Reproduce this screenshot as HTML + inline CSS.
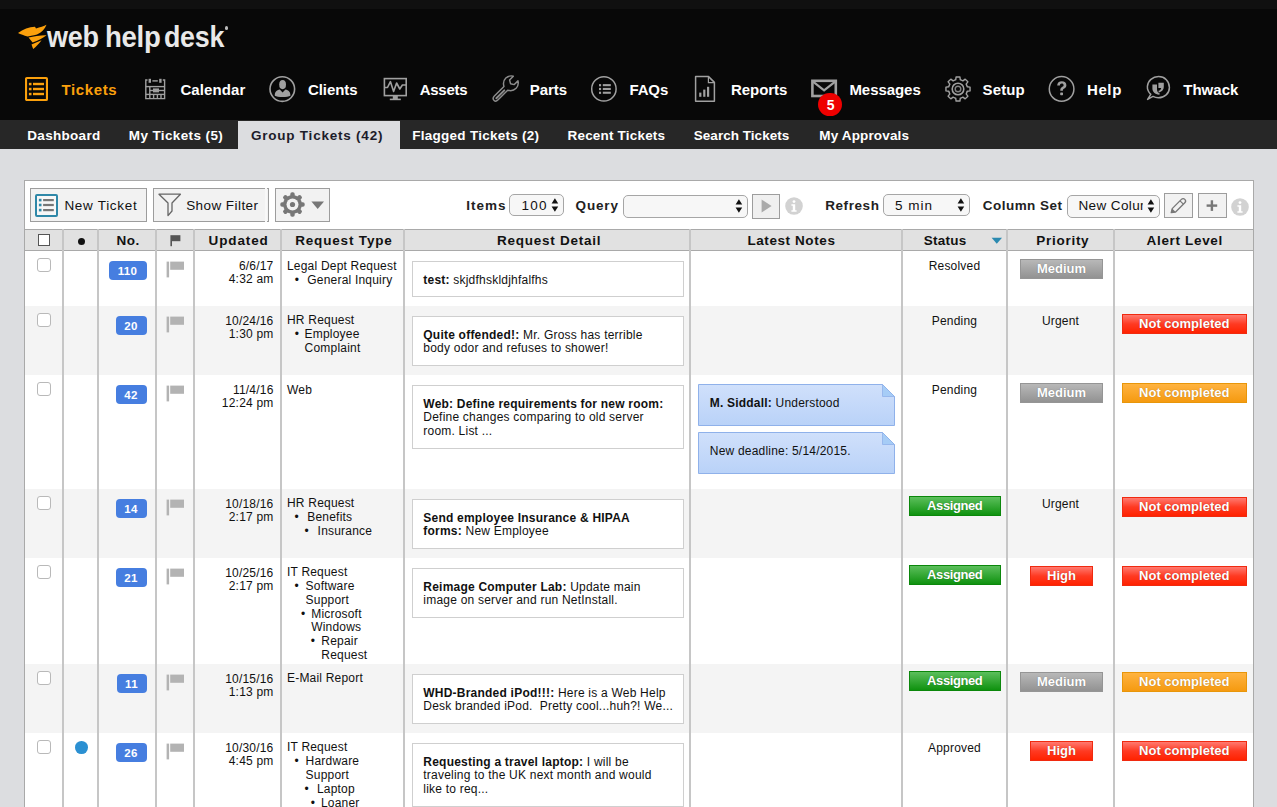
<!DOCTYPE html><html><head><meta charset="utf-8"><title>Web Help Desk</title><style>
html,body{margin:0;padding:0} body{width:1277px;height:807px;overflow:hidden;position:relative;background:#dcdde0;font-family:"Liberation Sans", sans-serif}
.t{position:absolute;white-space:nowrap}
</style></head><body>
<div style="position:absolute;left:0px;top:0px;width:1277px;height:9px;background:#101010"></div>
<div style="position:absolute;left:0px;top:9px;width:1277px;height:111px;background:#080808"></div>
<svg style="position:absolute;left:15px;top:22px" width="36" height="30" viewBox="0 0 36 30"><g fill="#fba00c"><path d="M3,11 C8,7.5 14,5 20,4.8 L21,6.5 C25,5.5 29,4 31.5,2.8 C30,7 26.5,10.5 22,12.6 C18,13.8 14,14.3 12.5,14.4 C9,13.6 5.5,12.2 3,11 Z"/><path d="M13.5,15.6 C19,14 26,13 31.6,13.2 C28,16 23,18.6 17.6,20.6 Z"/><path d="M16.5,22.4 C20,21 23.5,19.6 26.6,18.2 C24,21.6 21,24.6 18.2,27 C17.6,25.5 17,24 16.5,22.4 Z"/></g></svg>
<div class="t" style="left:46.50px;top:23.25px;font-size:29px;line-height:29px;font-weight:700;color:#e9e9e9;letter-spacing:-0.3px;transform:scaleX(0.93);transform-origin:0 0">web</div>
<div class="t" style="left:104.60px;top:23.25px;font-size:29px;line-height:29px;font-weight:700;color:#e9e9e9;letter-spacing:-0.3px;transform:scaleX(0.95);transform-origin:0 0">help</div>
<div class="t" style="left:163.60px;top:23.25px;font-size:29px;line-height:29px;font-weight:700;color:#e9e9e9;letter-spacing:-0.3px;transform:scaleX(0.925);transform-origin:0 0">desk</div>
<div style="position:absolute;left:224.6px;top:26.4px;width:3.2px;height:3.2px;border-radius:50%;background:#bbb"></div>
<svg style="position:absolute;left:25px;top:77px" width="23" height="24" viewBox="0 0 23 24"><rect x="1.05" y="1.05" width="20.9" height="21.9" fill="none" stroke="#fba00c" stroke-width="2.1" rx="0.8"/><g fill="#fba00c"><rect x="3.9" y="5.8" width="2.6" height="2.5"/><rect x="3.9" y="10.8" width="2.6" height="2.5"/><rect x="3.9" y="15.8" width="2.6" height="2.5"/><rect x="8" y="5.8" width="11" height="2.4"/><rect x="8" y="10.8" width="11" height="2.4"/><rect x="8" y="15.8" width="11" height="2.4"/></g></svg>
<div class="t" style="left:61.60px;top:82.20px;font-size:15px;line-height:15px;font-weight:700;color:#fba00c;letter-spacing:0.6px;">Tickets</div>
<svg style="position:absolute;left:144px;top:78px" width="22" height="22" viewBox="0 0 22 22"><g fill="none" stroke="#a0a0a0" stroke-width="1.4"><path d="M3.5,2 L1.8,2 L1.8,20.6 L20.6,20.6 L20.6,2 L18.8,2"/><line x1="1.8" y1="8.6" x2="20.6" y2="8.6"/><line x1="1.8" y1="16.4" x2="20.6" y2="16.4"/><line x1="5.8" y1="8.6" x2="5.8" y2="20.6"/><line x1="9.6" y1="16.4" x2="9.6" y2="20.6"/><line x1="13.4" y1="16.4" x2="13.4" y2="20.6"/><line x1="17" y1="16.4" x2="17" y2="20.6"/><line x1="5.8" y1="12.5" x2="20.6" y2="12.5"/></g><g fill="#a0a0a0"><rect x="4.6" y="0.8" width="2.4" height="4"/><rect x="15.2" y="0.8" width="2.4" height="4"/><rect x="8.4" y="2.2" width="5.4" height="1.4"/><rect x="9" y="10.4" width="6" height="4"/></g></svg>
<div class="t" style="left:180.40px;top:82.20px;font-size:15px;line-height:15px;font-weight:700;color:#ffffff;letter-spacing:0.1px;">Calendar</div>
<svg style="position:absolute;left:268px;top:75px" width="29" height="29" viewBox="0 0 29 29"><circle cx="14.3" cy="14.1" r="12.3" fill="none" stroke="#a0a0a0" stroke-width="1.6"/><g fill="#a0a0a0"><ellipse cx="14.6" cy="9.6" rx="3.4" ry="4.6"/><path d="M6.8,20.8 C6.6,17 8.6,15.3 11.8,14.6 L14.6,17.4 L17.4,14.6 C20.6,15.3 22.6,17 22.4,20.8 C19.8,22.4 9.4,22.4 6.8,20.8 Z"/></g></svg>
<div class="t" style="left:307.90px;top:82.20px;font-size:15px;line-height:15px;font-weight:700;color:#ffffff;letter-spacing:-0.05px;">Clients</div>
<svg style="position:absolute;left:383px;top:77px" width="25" height="25" viewBox="0 0 25 25"><rect x="1.4" y="1.6" width="21.8" height="17" fill="none" stroke="#a0a0a0" stroke-width="1.6"/><polyline points="1.6,10.5 4.5,10.5 7.4,4.6 10.6,14.4 13.6,6 16.8,12 19.4,8 23,8" fill="none" stroke="#a0a0a0" stroke-width="1.6" stroke-linejoin="round"/><g fill="#a0a0a0"><rect x="9.8" y="19" width="5" height="3"/><rect x="6.8" y="21.6" width="11" height="1.6"/></g></svg>
<div class="t" style="left:419.80px;top:82.20px;font-size:15px;line-height:15px;font-weight:700;color:#ffffff;letter-spacing:-0.3px;">Assets</div>
<svg style="position:absolute;left:490px;top:74px" width="32" height="30" viewBox="0 0 32 30"><g transform="translate(15,14) scale(1.17) translate(-15,-14)"><path d="M5.2,24.2 C4,23 4.2,21.6 5.4,20.4 L13.6,12.2 C12.8,9.6 13.2,7 15.2,5 C17,3.4 19.4,2.8 21.6,3.4 L18.4,6.6 L19.2,9.8 L22.4,10.6 L25.6,7.4 C26.2,9.6 25.6,12 24,13.8 C22,15.8 19.4,16.2 16.8,15.4 L8.6,23.6 C7.4,24.8 6.2,25.2 5.2,24.2 Z" fill="none" stroke="#8c8c8c" stroke-width="1.25" stroke-linejoin="round" transform="translate(0.5,0.5)"/><line x1="7.6" y1="22.8" x2="14.4" y2="16" stroke="#8c8c8c" stroke-width="1.7" stroke-linecap="round"/></g></svg>
<div class="t" style="left:529.80px;top:82.20px;font-size:15px;line-height:15px;font-weight:700;color:#ffffff;letter-spacing:-0.05px;">Parts</div>
<svg style="position:absolute;left:589px;top:75px" width="29" height="28" viewBox="0 0 29 28"><circle cx="14.9" cy="13.9" r="12.2" fill="none" stroke="#a0a0a0" stroke-width="1.5"/><g fill="#a0a0a0"><rect x="10" y="9.1" width="2.1" height="2.2"/><rect x="10" y="12.9" width="2.1" height="2.2"/><rect x="10" y="16.7" width="2.1" height="2.2"/><rect x="13.8" y="9.1" width="8" height="2.1"/><rect x="13.8" y="12.9" width="8" height="2.1"/><rect x="13.8" y="16.7" width="8" height="2.1"/></g></svg>
<div class="t" style="left:629.40px;top:82.20px;font-size:15px;line-height:15px;font-weight:700;color:#ffffff;letter-spacing:-0.1px;">FAQs</div>
<svg style="position:absolute;left:694px;top:75px" width="23" height="28" viewBox="0 0 23 28"><path d="M1.6,1.6 L14.6,1.6 L20.4,7.4 L20.4,26.2 L1.6,26.2 Z" fill="none" stroke="#a0a0a0" stroke-width="1.5" stroke-linejoin="round"/><path d="M14.4,2 L14.4,7.6 L20,7.6" fill="none" stroke="#a0a0a0" stroke-width="1.2"/><g fill="#a0a0a0"><rect x="5.2" y="17.6" width="2.2" height="4.2"/><rect x="9.2" y="14.6" width="2.2" height="7.2"/><rect x="13" y="11.8" width="2.2" height="10"/></g></svg>
<div class="t" style="left:731.00px;top:82.20px;font-size:15px;line-height:15px;font-weight:700;color:#ffffff;letter-spacing:-0.05px;">Reports</div>
<svg style="position:absolute;left:810px;top:79px" width="28" height="20" viewBox="0 0 28 20"><rect x="2.4" y="1.8" width="23.4" height="15.2" fill="none" stroke="#a0a0a0" stroke-width="2.6"/><polyline points="3,2.6 14.1,11.4 25.2,2.6" fill="none" stroke="#a0a0a0" stroke-width="2.2"/></svg>
<div style="position:absolute;left:818.3px;top:92.9px;width:23.6px;height:23.6px;border-radius:50%;background:#ee0000"></div>
<div class="t" style="left:630.60px;width:400px;text-align:center;top:97.55px;font-size:14px;line-height:14px;font-weight:700;color:#fff;letter-spacing:0px;">5</div>
<div class="t" style="left:849.40px;top:82.20px;font-size:15px;line-height:15px;font-weight:700;color:#ffffff;letter-spacing:-0.05px;">Messages</div>
<svg style="position:absolute;left:945px;top:75.8px" width="26" height="26" viewBox="0 0 26 26"><path d="M10.14,3.94 L10.70,3.78 L11.09,0.95 L14.91,0.95 L15.30,3.78 L15.86,3.94 L17.39,4.57 L17.89,4.86 L20.17,3.13 L22.87,5.83 L21.14,8.11 L21.43,8.61 L22.06,10.14 L22.22,10.70 L25.05,11.09 L25.05,14.91 L22.22,15.30 L22.06,15.86 L21.43,17.39 L21.14,17.89 L22.87,20.17 L20.17,22.87 L17.89,21.14 L17.39,21.43 L15.86,22.06 L15.30,22.22 L14.91,25.05 L11.09,25.05 L10.70,22.22 L10.14,22.06 L8.61,21.43 L8.11,21.14 L5.83,22.87 L3.13,20.17 L4.86,17.89 L4.57,17.39 L3.94,15.86 L3.78,15.30 L0.95,14.91 L0.95,11.09 L3.78,10.70 L3.94,10.14 L4.57,8.61 L4.86,8.11 L3.13,5.83 L5.83,3.13 L8.11,4.86 L8.61,4.57 Z" fill="none" stroke="#a0a0a0" stroke-width="1.4" stroke-linejoin="round"/><circle cx="13" cy="13" r="5.8" fill="none" stroke="#a0a0a0" stroke-width="1.6"/><circle cx="13" cy="13" r="2.8" fill="none" stroke="#a0a0a0" stroke-width="1.4" opacity="0.8"/></svg>
<div class="t" style="left:982.60px;top:82.20px;font-size:15px;line-height:15px;font-weight:700;color:#ffffff;letter-spacing:0.1px;">Setup</div>
<svg style="position:absolute;left:1047px;top:75px" width="29" height="28" viewBox="0 0 29 28"><circle cx="14.6" cy="13.9" r="12.3" fill="none" stroke="#a0a0a0" stroke-width="1.5"/><path d="M10.2,10.6 C10.2,7.6 12.2,6.2 14.8,6.2 C17.6,6.2 19.4,7.8 19.4,10.2 C19.4,12.2 18.2,13 16.8,13.8 C16,14.3 15.9,14.8 15.9,15.8 L13.3,15.8 C13.2,14 13.6,13 15,12.1 C16.2,11.3 16.6,10.9 16.6,10.2 C16.6,9.2 15.9,8.6 14.8,8.6 C13.6,8.6 12.9,9.4 12.9,10.6 Z" fill="#a0a0a0"/><rect x="13.2" y="17.4" width="2.8" height="2.8" rx="0.6" fill="#a0a0a0"/></svg>
<div class="t" style="left:1087.00px;top:82.20px;font-size:15px;line-height:15px;font-weight:700;color:#ffffff;letter-spacing:0.6px;">Help</div>
<svg style="position:absolute;left:1144px;top:75px" width="28" height="29" viewBox="0 0 28 29"><path d="M3.6,24.4 L6.8,19.4 C4.4,17 3.2,14.2 3.4,11.4 C3.8,5.6 8.6,1.6 14.6,1.6 C20.8,1.6 25.4,6.2 25.4,12.4 C25.4,18.6 20.4,22.8 14.4,22.8 C12.2,22.8 10.4,22.2 9,21.4 Z" fill="none" stroke="#a0a0a0" stroke-width="1.5" stroke-linejoin="round"/><g fill="#a0a0a0"><path d="M8.4,9.4 L13,9.4 L13,14 C13,16.4 14,18 16,18.8 L15.2,19.8 C11,19.4 8.4,17 8.4,13.6 Z"/><path d="M14.4,7.8 L19.8,7.8 L19.8,11.6 C19.8,15.2 17.4,17.2 14.6,17.4 L14.6,15.8 C16,15.6 17,14.4 17.2,13 L14.4,13 Z"/></g></svg>
<div class="t" style="left:1183.20px;top:82.20px;font-size:15px;line-height:15px;font-weight:700;color:#ffffff;letter-spacing:0.05px;">Thwack</div>
<div style="position:absolute;left:0px;top:120px;width:1277px;height:28.6px;background:#272727"></div>
<div style="position:absolute;left:238px;top:121.4px;width:162px;height:28px;background:#dcdde0"></div>
<div class="t" style="left:27.30px;top:129.47px;font-size:13.5px;line-height:13.5px;font-weight:700;color:#fff;letter-spacing:0.3px;">Dashboard</div>
<div class="t" style="left:128.80px;top:129.47px;font-size:13.5px;line-height:13.5px;font-weight:700;color:#fff;letter-spacing:0.38px;">My Tickets (5)</div>
<div class="t" style="left:250.90px;top:129.47px;font-size:13.5px;line-height:13.5px;font-weight:700;color:#1c1c2a;letter-spacing:0.78px;">Group Tickets (42)</div>
<div class="t" style="left:412.30px;top:129.47px;font-size:13.5px;line-height:13.5px;font-weight:700;color:#fff;letter-spacing:0.26px;">Flagged Tickets (2)</div>
<div class="t" style="left:567.50px;top:129.47px;font-size:13.5px;line-height:13.5px;font-weight:700;color:#fff;letter-spacing:0.19px;">Recent Tickets</div>
<div class="t" style="left:693.80px;top:129.47px;font-size:13.5px;line-height:13.5px;font-weight:700;color:#fff;letter-spacing:0.03px;">Search Tickets</div>
<div class="t" style="left:819.30px;top:129.47px;font-size:13.5px;line-height:13.5px;font-weight:700;color:#fff;letter-spacing:0.15px;">My Approvals</div>
<div style="position:absolute;left:24px;top:180px;width:1230px;height:700px;background:#fff;border:1px solid #a9a9a9;box-sizing:border-box"></div>
<div style="position:absolute;left:30px;top:188px;width:117px;height:34px;background:#f2f2f2;border:1px solid #9d9d9d;box-sizing:border-box"></div>
<svg style="position:absolute;left:35px;top:194px" width="23" height="23" viewBox="0 0 23 23"><rect x="1" y="1" width="21" height="21" fill="#f7f7f7" stroke="#2f88a8" stroke-width="2" rx="1"/><g fill="#2f88a8"><rect x="3.9" y="4.8" width="2.6" height="2.6"/><rect x="3.9" y="9.7" width="2.6" height="2.6"/><rect x="3.9" y="14.8" width="2.6" height="2.6"/></g><g fill="#777"><rect x="8.1" y="5" width="10.7" height="2.2"/><rect x="8.1" y="9.9" width="10.7" height="2.2"/><rect x="8.1" y="15" width="10.7" height="2.2"/></g></svg>
<div class="t" style="left:64.40px;top:198.57px;font-size:13.5px;line-height:13.5px;font-weight:400;color:#111;letter-spacing:0.7px;">New Ticket</div>
<div style="position:absolute;left:153px;top:188px;width:116px;height:34px;background:#f2f2f2;border:1px solid #9d9d9d;box-sizing:border-box"></div>
<svg style="position:absolute;left:157px;top:192px" width="26" height="26" viewBox="0 0 26 26"><path d="M2,2.2 L23.4,2.2 L15,11 L15,19 L11,23.6 L11,11 Z" fill="none" stroke="#666" stroke-width="1.3" stroke-linejoin="round"/></svg>
<div style="position:absolute;left:265px;top:188px;width:2px;height:34px;background:#f8f8f8"></div>
<div class="t" style="left:186.20px;top:198.57px;font-size:13.5px;line-height:13.5px;font-weight:400;color:#111;letter-spacing:0.43px;">Show Filter</div>
<div style="position:absolute;left:275px;top:188px;width:55px;height:34px;background:#f2f2f2;border:1px solid #9d9d9d;box-sizing:border-box"></div>
<svg style="position:absolute;left:280px;top:191.5px" width="25" height="25" viewBox="0 0 25 25"><circle cx="12.5" cy="12.5" r="9.4" fill="#777"/><rect x="10.3" y="0.3" width="4.4" height="6" rx="1.8" fill="#777" transform="rotate(0 12.5 12.5)"/><rect x="10.3" y="0.3" width="4.4" height="6" rx="1.8" fill="#777" transform="rotate(45 12.5 12.5)"/><rect x="10.3" y="0.3" width="4.4" height="6" rx="1.8" fill="#777" transform="rotate(90 12.5 12.5)"/><rect x="10.3" y="0.3" width="4.4" height="6" rx="1.8" fill="#777" transform="rotate(135 12.5 12.5)"/><rect x="10.3" y="0.3" width="4.4" height="6" rx="1.8" fill="#777" transform="rotate(180 12.5 12.5)"/><rect x="10.3" y="0.3" width="4.4" height="6" rx="1.8" fill="#777" transform="rotate(225 12.5 12.5)"/><rect x="10.3" y="0.3" width="4.4" height="6" rx="1.8" fill="#777" transform="rotate(270 12.5 12.5)"/><rect x="10.3" y="0.3" width="4.4" height="6" rx="1.8" fill="#777" transform="rotate(315 12.5 12.5)"/><circle cx="12.5" cy="12.5" r="6" fill="#f2f2f2"/><circle cx="12.5" cy="12.5" r="2.6" fill="#777"/></svg>
<svg style="position:absolute;left:311px;top:201px" width="14" height="9" viewBox="0 0 14 9"><path d="M0.4,0.4 L13,0.4 L6.7,8 Z" fill="#777"/></svg>
<div class="t" style="left:466.30px;top:198.57px;font-size:13.5px;line-height:13.5px;font-weight:700;color:#222;letter-spacing:1.0px;">Items</div>
<div style="position:absolute;left:509px;top:194px;width:55px;height:22px;background:#f7f7f7;border:1px solid #a6a6a6;border-radius:5px;box-sizing:border-box"></div>
<div class="t" style="left:521.60px;top:198.57px;font-size:13.5px;line-height:13.5px;font-weight:400;color:#111;letter-spacing:1.2px;">100</div>
<svg style="position:absolute;left:550.8px;top:197px" width="8" height="16" viewBox="0 0 8 16"><path d="M0.6,6.6 L7.2,6.6 L3.9,1.2 Z M0.6,9.4 L7.2,9.4 L3.9,14.8 Z" fill="#111"/></svg>
<div class="t" style="left:575.60px;top:198.57px;font-size:13.5px;line-height:13.5px;font-weight:700;color:#222;letter-spacing:0.82px;">Query</div>
<div style="position:absolute;left:623px;top:195px;width:125px;height:23px;background:#f7f7f7;border:1px solid #a6a6a6;border-radius:5px;box-sizing:border-box"></div>
<svg style="position:absolute;left:734.8px;top:198.4px" width="8" height="16" viewBox="0 0 8 16"><path d="M0.6,6.6 L7.2,6.6 L3.9,1.2 Z M0.6,9.4 L7.2,9.4 L3.9,14.8 Z" fill="#111"/></svg>
<div style="position:absolute;left:752px;top:194px;width:28px;height:25px;background:#f0f0f0;border:1px solid #9d9d9d;box-sizing:border-box"></div>
<svg style="position:absolute;left:761px;top:199px" width="12" height="15" viewBox="0 0 12 15"><path d="M0.6,0.6 L10.6,7 L0.6,13.6 Z" fill="#aaa"/></svg>
<svg style="position:absolute;left:785.2px;top:197.4px" width="18" height="18" viewBox="0 0 18 18"><circle cx="9" cy="9" r="8.8" fill="#d2d2d2"/><circle cx="9" cy="4.6" r="1.4" fill="#fff"/><path d="M6.4,7.2 L10.2,7.2 L10.2,13.2 L11.6,13.2 L11.6,14.8 L6.4,14.8 L6.4,13.2 L7.8,13.2 L7.8,8.8 L6.4,8.8 Z" fill="#fff"/></svg>
<div class="t" style="left:825.20px;top:198.57px;font-size:13.5px;line-height:13.5px;font-weight:700;color:#222;letter-spacing:0.57px;">Refresh</div>
<div style="position:absolute;left:883px;top:194px;width:87px;height:22px;background:#f7f7f7;border:1px solid #a6a6a6;border-radius:5px;box-sizing:border-box"></div>
<div class="t" style="left:894.90px;top:198.57px;font-size:13.5px;line-height:13.5px;font-weight:400;color:#111;letter-spacing:1.0px;">5 min</div>
<svg style="position:absolute;left:957px;top:197px" width="8" height="16" viewBox="0 0 8 16"><path d="M0.6,6.6 L7.2,6.6 L3.9,1.2 Z M0.6,9.4 L7.2,9.4 L3.9,14.8 Z" fill="#111"/></svg>
<div class="t" style="left:982.80px;top:198.57px;font-size:13.5px;line-height:13.5px;font-weight:700;color:#222;letter-spacing:0.46px;">Column Set</div>
<div style="position:absolute;left:1067px;top:195px;width:93px;height:23px;background:#f7f7f7;border:1px solid #a6a6a6;border-radius:5px;box-sizing:border-box"></div>
<div class="t" style="left:1078.4px;top:198.6px;width:65px;overflow:hidden;font-size:13.5px;line-height:13.5px;color:#111;letter-spacing:0.4px">New Column Set</div>
<svg style="position:absolute;left:1147px;top:198.4px" width="8" height="16" viewBox="0 0 8 16"><path d="M0.6,6.6 L7.2,6.6 L3.9,1.2 Z M0.6,9.4 L7.2,9.4 L3.9,14.8 Z" fill="#111"/></svg>
<div style="position:absolute;left:1164px;top:193px;width:29px;height:25px;background:#f2f2f2;border:1px solid #9d9d9d;box-sizing:border-box"></div>
<svg style="position:absolute;left:1169px;top:197px" width="19" height="18" viewBox="0 0 19 18"><path d="M2.2,15.6 L3.2,11.6 L12.4,2.4 C13.4,1.4 14.8,1.4 15.8,2.4 C16.8,3.4 16.8,4.8 15.8,5.8 L6.6,15 Z" fill="none" stroke="#777" stroke-width="1.3" stroke-linejoin="round"/><path d="M2.2,15.6 L3.2,11.6 L6.6,15 Z" fill="#777"/><line x1="11" y1="3.8" x2="14.4" y2="7.2" stroke="#777" stroke-width="1.2"/></svg>
<div style="position:absolute;left:1198px;top:193px;width:29px;height:25px;background:#f2f2f2;border:1px solid #9d9d9d;box-sizing:border-box"></div>
<svg style="position:absolute;left:1206px;top:200px" width="13" height="11" viewBox="0 0 13 11"><rect x="0.6" y="4.4" width="10.6" height="2.4" fill="#777"/><rect x="4.7" y="0.3" width="2.4" height="10.6" fill="#777"/></svg>
<svg style="position:absolute;left:1231.2px;top:197.5px" width="18" height="18" viewBox="0 0 18 18"><circle cx="9" cy="9" r="8.8" fill="#d2d2d2"/><circle cx="9" cy="4.6" r="1.4" fill="#fff"/><path d="M6.4,7.2 L10.2,7.2 L10.2,13.2 L11.6,13.2 L11.6,14.8 L6.4,14.8 L6.4,13.2 L7.8,13.2 L7.8,8.8 L6.4,8.8 Z" fill="#fff"/></svg>
<div style="position:absolute;left:24px;top:229px;width:1230px;height:22px;background:#e1e1e1;border-top:1px solid #a9a9a9;border-bottom:1px solid #a9a9a9;box-sizing:border-box"></div>
<div style="position:absolute;left:25px;top:251px;width:1228px;height:55px;background:#ffffff"></div>
<div style="position:absolute;left:25px;top:306px;width:1228px;height:69px;background:#f4f4f4"></div>
<div style="position:absolute;left:25px;top:375px;width:1228px;height:114px;background:#ffffff"></div>
<div style="position:absolute;left:25px;top:489px;width:1228px;height:69px;background:#f4f4f4"></div>
<div style="position:absolute;left:25px;top:558px;width:1228px;height:106px;background:#ffffff"></div>
<div style="position:absolute;left:25px;top:664px;width:1228px;height:69px;background:#f4f4f4"></div>
<div style="position:absolute;left:25px;top:733px;width:1228px;height:74px;background:#ffffff"></div>
<div style="position:absolute;left:62px;top:229px;width:2px;height:600px;background:#c6c6c6"></div>
<div style="position:absolute;left:97px;top:229px;width:2px;height:600px;background:#c6c6c6"></div>
<div style="position:absolute;left:155px;top:229px;width:2px;height:600px;background:#c6c6c6"></div>
<div style="position:absolute;left:193px;top:229px;width:2px;height:600px;background:#c6c6c6"></div>
<div style="position:absolute;left:280px;top:229px;width:2px;height:600px;background:#c6c6c6"></div>
<div style="position:absolute;left:403px;top:229px;width:2px;height:600px;background:#c6c6c6"></div>
<div style="position:absolute;left:689px;top:229px;width:2px;height:600px;background:#c6c6c6"></div>
<div style="position:absolute;left:901px;top:229px;width:2px;height:600px;background:#c6c6c6"></div>
<div style="position:absolute;left:1006px;top:229px;width:2px;height:600px;background:#c6c6c6"></div>
<div style="position:absolute;left:1113px;top:229px;width:2px;height:600px;background:#c6c6c6"></div>
<div style="position:absolute;left:24px;top:229px;width:1px;height:600px;background:#a9a9a9"></div>
<div style="position:absolute;left:1253px;top:180px;width:1px;height:650px;background:#a9a9a9"></div>
<div style="position:absolute;left:38px;top:234px;width:12px;height:12px;background:#fff;border:1px solid #555;box-sizing:border-box"></div>
<div style="position:absolute;left:77.5px;top:237.5px;width:7px;height:7px;border-radius:50%;background:#111"></div>
<div class="t" style="left:116.40px;top:233.57px;font-size:13.5px;line-height:13.5px;font-weight:700;color:#111;letter-spacing:0.5px;">No.</div>
<svg style="position:absolute;left:170px;top:235px" width="11" height="12" viewBox="0 0 11 12"><rect x="0.4" y="0.2" width="1.6" height="11" fill="#555"/><rect x="2" y="0.2" width="8.4" height="6" fill="#555"/></svg>
<div class="t" style="left:208.50px;top:233.57px;font-size:13.5px;line-height:13.5px;font-weight:700;color:#111;letter-spacing:0.88px;">Updated</div>
<div class="t" style="left:295.20px;top:233.57px;font-size:13.5px;line-height:13.5px;font-weight:700;color:#111;letter-spacing:0.83px;">Request Type</div>
<div class="t" style="left:497.00px;top:233.57px;font-size:13.5px;line-height:13.5px;font-weight:700;color:#111;letter-spacing:0.74px;">Request Detail</div>
<div class="t" style="left:747.40px;top:233.57px;font-size:13.5px;line-height:13.5px;font-weight:700;color:#111;letter-spacing:0.59px;">Latest Notes</div>
<div class="t" style="left:923.80px;top:233.57px;font-size:13.5px;line-height:13.5px;font-weight:700;color:#111;letter-spacing:0.26px;">Status</div>
<svg style="position:absolute;left:991px;top:237px" width="12" height="8" viewBox="0 0 12 8"><path d="M0.6,0.8 L11,0.8 L5.8,6.8 Z" fill="#2b8ab0"/></svg>
<div class="t" style="left:1036.20px;top:233.57px;font-size:13.5px;line-height:13.5px;font-weight:700;color:#111;letter-spacing:0.74px;">Priority</div>
<div class="t" style="left:1146.60px;top:233.57px;font-size:13.5px;line-height:13.5px;font-weight:700;color:#111;letter-spacing:0.66px;">Alert Level</div>
<div style="position:absolute;left:37px;top:258px;width:14px;height:14px;background:#fff;border:1px solid #b9b9b9;border-radius:3px;box-sizing:border-box"></div>
<div style="position:absolute;left:108.5px;top:261px;width:38px;height:19px;border-radius:4px;background:#467ee0;color:#fff;font-weight:700;font-size:11.5px;line-height:21.4px;text-align:center;letter-spacing:0.3px">110</div>
<svg style="position:absolute;left:166px;top:261px" width="19" height="17" viewBox="0 0 19 17"><rect x="0.6" y="0.6" width="2.5" height="15.8" fill="#b3b3b3"/><rect x="4.2" y="0.6" width="13.8" height="8.2" fill="#b3b3b3"/></svg>
<div class="t" style="right:1003.50px;top:259.64px;font-size:12px;line-height:12px;font-weight:400;color:#111;letter-spacing:0.2px;text-align:right;">6/6/17</div>
<div class="t" style="right:1003.50px;top:273.44px;font-size:12px;line-height:12px;font-weight:400;color:#111;letter-spacing:0.2px;text-align:right;">4:32 am</div>
<div class="t" style="left:287.00px;top:259.84px;font-size:12px;line-height:12px;font-weight:400;color:#111;letter-spacing:0.2px;">Legal Dept Request</div>
<div class="t" style="left:294.80px;top:273.64px;font-size:12px;line-height:12px;font-weight:400;color:#111;letter-spacing:0px;">&bull;</div>
<div class="t" style="left:307.30px;top:273.64px;font-size:12px;line-height:12px;font-weight:400;color:#111;letter-spacing:0.2px;">General Inquiry</div>
<div style="position:absolute;left:412px;top:261px;width:272px;height:36px;background:#fff;border:1px solid #cfcfcf;box-sizing:border-box"></div>
<div class="t" style="left:423.30px;top:273.54px;font-size:12px;line-height:12px;font-weight:400;color:#111;letter-spacing:0.22px;"><b>test:</b> skjdfhskldjhfalfhs</div>
<div class="t" style="left:754.50px;width:400px;text-align:center;top:259.84px;font-size:12px;line-height:12px;font-weight:400;color:#111;letter-spacing:0.2px;">Resolved</div>
<div style="position:absolute;left:1020px;top:259px;width:83px;height:20px;box-sizing:border-box;background:linear-gradient(#b8b8b8,#929292);border:1px solid #959595;color:#fff;font-weight:700;font-size:13px;line-height:18px;text-align:center;letter-spacing:0px;text-shadow:0 0 1px rgba(0,0,0,0.35)">Medium</div>
<div style="position:absolute;left:37px;top:313px;width:14px;height:14px;background:#fff;border:1px solid #b9b9b9;border-radius:3px;box-sizing:border-box"></div>
<div style="position:absolute;left:115.5px;top:316px;width:31px;height:19px;border-radius:4px;background:#467ee0;color:#fff;font-weight:700;font-size:11.5px;line-height:21.4px;text-align:center;letter-spacing:0.3px">20</div>
<svg style="position:absolute;left:166px;top:316px" width="19" height="17" viewBox="0 0 19 17"><rect x="0.6" y="0.6" width="2.5" height="15.8" fill="#b3b3b3"/><rect x="4.2" y="0.6" width="13.8" height="8.2" fill="#b3b3b3"/></svg>
<div class="t" style="right:1003.50px;top:314.64px;font-size:12px;line-height:12px;font-weight:400;color:#111;letter-spacing:0.2px;text-align:right;">10/24/16</div>
<div class="t" style="right:1003.50px;top:328.44px;font-size:12px;line-height:12px;font-weight:400;color:#111;letter-spacing:0.2px;text-align:right;">1:30 pm</div>
<div class="t" style="left:287.00px;top:314.44px;font-size:12px;line-height:12px;font-weight:400;color:#111;letter-spacing:0.2px;">HR Request</div>
<div class="t" style="left:294.80px;top:328.24px;font-size:12px;line-height:12px;font-weight:400;color:#111;letter-spacing:0px;">&bull;</div>
<div class="t" style="left:304.60px;top:328.24px;font-size:12px;line-height:12px;font-weight:400;color:#111;letter-spacing:0.2px;">Employee</div>
<div class="t" style="left:304.60px;top:342.04px;font-size:12px;line-height:12px;font-weight:400;color:#111;letter-spacing:0.2px;">Complaint</div>
<div style="position:absolute;left:412px;top:316px;width:272px;height:50px;background:#fff;border:1px solid #cfcfcf;box-sizing:border-box"></div>
<div class="t" style="left:423.30px;top:328.54px;font-size:12px;line-height:12px;font-weight:400;color:#111;letter-spacing:0.22px;"><b>Quite offended!:</b> Mr. Gross has terrible</div>
<div class="t" style="left:423.30px;top:342.34px;font-size:12px;line-height:12px;font-weight:400;color:#111;letter-spacing:0.22px;">body odor and refuses to shower!</div>
<div class="t" style="left:754.50px;width:400px;text-align:center;top:314.84px;font-size:12px;line-height:12px;font-weight:400;color:#111;letter-spacing:0.2px;">Pending</div>
<div class="t" style="left:860.50px;width:400px;text-align:center;top:314.84px;font-size:12px;line-height:12px;font-weight:400;color:#111;letter-spacing:0.2px;">Urgent</div>
<div style="position:absolute;left:1121.5px;top:313.5px;width:125.5px;height:20px;box-sizing:border-box;background:linear-gradient(#ff7a70,#ff3a22 50%,#ff2200);border:1px solid #f02a10;color:#fff;font-weight:700;font-size:13px;line-height:18px;text-align:center;letter-spacing:0px;text-shadow:0 0 1px rgba(0,0,0,0.35)">Not completed</div>
<div style="position:absolute;left:37px;top:382px;width:14px;height:14px;background:#fff;border:1px solid #b9b9b9;border-radius:3px;box-sizing:border-box"></div>
<div style="position:absolute;left:115.5px;top:385px;width:31px;height:19px;border-radius:4px;background:#467ee0;color:#fff;font-weight:700;font-size:11.5px;line-height:21.4px;text-align:center;letter-spacing:0.3px">42</div>
<svg style="position:absolute;left:166px;top:385px" width="19" height="17" viewBox="0 0 19 17"><rect x="0.6" y="0.6" width="2.5" height="15.8" fill="#b3b3b3"/><rect x="4.2" y="0.6" width="13.8" height="8.2" fill="#b3b3b3"/></svg>
<div class="t" style="right:1003.50px;top:383.64px;font-size:12px;line-height:12px;font-weight:400;color:#111;letter-spacing:0.2px;text-align:right;">11/4/16</div>
<div class="t" style="right:1003.50px;top:397.44px;font-size:12px;line-height:12px;font-weight:400;color:#111;letter-spacing:0.2px;text-align:right;">12:24 pm</div>
<div class="t" style="left:287.00px;top:383.54px;font-size:12px;line-height:12px;font-weight:400;color:#111;letter-spacing:0.2px;">Web</div>
<div style="position:absolute;left:412px;top:385px;width:272px;height:64px;background:#fff;border:1px solid #cfcfcf;box-sizing:border-box"></div>
<div class="t" style="left:423.30px;top:397.54px;font-size:12px;line-height:12px;font-weight:400;color:#111;letter-spacing:0.22px;"><b>Web: Define requirements for new room:</b></div>
<div class="t" style="left:423.30px;top:411.34px;font-size:12px;line-height:12px;font-weight:400;color:#111;letter-spacing:0.22px;">Define changes comparing to old server</div>
<div class="t" style="left:423.30px;top:425.14px;font-size:12px;line-height:12px;font-weight:400;color:#111;letter-spacing:0.22px;">room. List ...</div>
<div class="t" style="left:754.50px;width:400px;text-align:center;top:383.84px;font-size:12px;line-height:12px;font-weight:400;color:#111;letter-spacing:0.2px;">Pending</div>
<div style="position:absolute;left:1020px;top:383px;width:83px;height:20px;box-sizing:border-box;background:linear-gradient(#b8b8b8,#929292);border:1px solid #959595;color:#fff;font-weight:700;font-size:13px;line-height:18px;text-align:center;letter-spacing:0px;text-shadow:0 0 1px rgba(0,0,0,0.35)">Medium</div>
<div style="position:absolute;left:1121.5px;top:382.5px;width:125.5px;height:20px;box-sizing:border-box;background:linear-gradient(#ffb340,#f59a10);border:1px solid #e8960a;color:#fff;font-weight:700;font-size:13px;line-height:18px;text-align:center;letter-spacing:0px;text-shadow:0 0 1px rgba(0,0,0,0.35)">Not completed</div>
<svg style="position:absolute;left:698px;top:384.0px" width="198" height="43" viewBox="0 0 198 43"><defs><linearGradient id="ng0" x1="0" y1="0" x2="0" y2="1"><stop offset="0" stop-color="#d0e0fb"/><stop offset="1" stop-color="#b9d2f8"/></linearGradient></defs><path d="M0.5,0.5 H184.5 L196.5,12.5 V41.5 H0.5 Z" fill="url(#ng0)" stroke="#8fb1ea"/><path d="M184.5,0.5 V12.5 H196.5 Z" fill="#a6ccf6" stroke="#8fb1ea" stroke-width="0.8"/></svg>
<div class="t" style="left:709.80px;top:397.44px;font-size:12px;line-height:12px;font-weight:400;color:#111;letter-spacing:0.2px;"><b>M. Siddall:</b> Understood</div>
<svg style="position:absolute;left:698px;top:431.8px" width="198" height="43" viewBox="0 0 198 43"><defs><linearGradient id="ng1" x1="0" y1="0" x2="0" y2="1"><stop offset="0" stop-color="#d0e0fb"/><stop offset="1" stop-color="#b9d2f8"/></linearGradient></defs><path d="M0.5,0.5 H184.5 L196.5,12.5 V41.5 H0.5 Z" fill="url(#ng1)" stroke="#8fb1ea"/><path d="M184.5,0.5 V12.5 H196.5 Z" fill="#a6ccf6" stroke="#8fb1ea" stroke-width="0.8"/></svg>
<div class="t" style="left:709.80px;top:445.24px;font-size:12px;line-height:12px;font-weight:400;color:#111;letter-spacing:0.2px;">New deadline: 5/14/2015.</div>
<div style="position:absolute;left:37px;top:496px;width:14px;height:14px;background:#fff;border:1px solid #b9b9b9;border-radius:3px;box-sizing:border-box"></div>
<div style="position:absolute;left:115.5px;top:499px;width:31px;height:19px;border-radius:4px;background:#467ee0;color:#fff;font-weight:700;font-size:11.5px;line-height:21.4px;text-align:center;letter-spacing:0.3px">14</div>
<svg style="position:absolute;left:166px;top:499px" width="19" height="17" viewBox="0 0 19 17"><rect x="0.6" y="0.6" width="2.5" height="15.8" fill="#b3b3b3"/><rect x="4.2" y="0.6" width="13.8" height="8.2" fill="#b3b3b3"/></svg>
<div class="t" style="right:1003.50px;top:497.64px;font-size:12px;line-height:12px;font-weight:400;color:#111;letter-spacing:0.2px;text-align:right;">10/18/16</div>
<div class="t" style="right:1003.50px;top:511.44px;font-size:12px;line-height:12px;font-weight:400;color:#111;letter-spacing:0.2px;text-align:right;">2:17 pm</div>
<div class="t" style="left:287.00px;top:497.34px;font-size:12px;line-height:12px;font-weight:400;color:#111;letter-spacing:0.2px;">HR Request</div>
<div class="t" style="left:294.60px;top:511.14px;font-size:12px;line-height:12px;font-weight:400;color:#111;letter-spacing:0px;">&bull;</div>
<div class="t" style="left:307.30px;top:511.14px;font-size:12px;line-height:12px;font-weight:400;color:#111;letter-spacing:0.2px;">Benefits</div>
<div class="t" style="left:304.40px;top:524.94px;font-size:12px;line-height:12px;font-weight:400;color:#111;letter-spacing:0px;">&bull;</div>
<div class="t" style="left:317.60px;top:524.94px;font-size:12px;line-height:12px;font-weight:400;color:#111;letter-spacing:0.2px;">Insurance</div>
<div style="position:absolute;left:412px;top:499px;width:272px;height:50px;background:#fff;border:1px solid #cfcfcf;box-sizing:border-box"></div>
<div class="t" style="left:423.30px;top:511.54px;font-size:12px;line-height:12px;font-weight:400;color:#111;letter-spacing:0.22px;"><b>Send employee Insurance &amp; HIPAA</b></div>
<div class="t" style="left:423.30px;top:525.34px;font-size:12px;line-height:12px;font-weight:400;color:#111;letter-spacing:0.22px;"><b>forms:</b> New Employee</div>
<div style="position:absolute;left:909px;top:496px;width:91.5px;height:20px;box-sizing:border-box;background:linear-gradient(#5cbf5c,#0f920f);border:1px solid #0b870b;color:#fff;font-weight:700;font-size:13px;line-height:18px;text-align:center;letter-spacing:-0.4px;text-shadow:0 0 1px rgba(0,0,0,0.35)">Assigned</div>
<div class="t" style="left:860.50px;width:400px;text-align:center;top:497.84px;font-size:12px;line-height:12px;font-weight:400;color:#111;letter-spacing:0.2px;">Urgent</div>
<div style="position:absolute;left:1121.5px;top:496.5px;width:125.5px;height:20px;box-sizing:border-box;background:linear-gradient(#ff7a70,#ff3a22 50%,#ff2200);border:1px solid #f02a10;color:#fff;font-weight:700;font-size:13px;line-height:18px;text-align:center;letter-spacing:0px;text-shadow:0 0 1px rgba(0,0,0,0.35)">Not completed</div>
<div style="position:absolute;left:37px;top:565px;width:14px;height:14px;background:#fff;border:1px solid #b9b9b9;border-radius:3px;box-sizing:border-box"></div>
<div style="position:absolute;left:115.5px;top:568px;width:31px;height:19px;border-radius:4px;background:#467ee0;color:#fff;font-weight:700;font-size:11.5px;line-height:21.4px;text-align:center;letter-spacing:0.3px">21</div>
<svg style="position:absolute;left:166px;top:568px" width="19" height="17" viewBox="0 0 19 17"><rect x="0.6" y="0.6" width="2.5" height="15.8" fill="#b3b3b3"/><rect x="4.2" y="0.6" width="13.8" height="8.2" fill="#b3b3b3"/></svg>
<div class="t" style="right:1003.50px;top:566.64px;font-size:12px;line-height:12px;font-weight:400;color:#111;letter-spacing:0.2px;text-align:right;">10/25/16</div>
<div class="t" style="right:1003.50px;top:580.44px;font-size:12px;line-height:12px;font-weight:400;color:#111;letter-spacing:0.2px;text-align:right;">2:17 pm</div>
<div class="t" style="left:287.00px;top:566.24px;font-size:12px;line-height:12px;font-weight:400;color:#111;letter-spacing:0.2px;">IT Request</div>
<div class="t" style="left:294.50px;top:580.04px;font-size:12px;line-height:12px;font-weight:400;color:#111;letter-spacing:0px;">&bull;</div>
<div class="t" style="left:305.60px;top:580.04px;font-size:12px;line-height:12px;font-weight:400;color:#111;letter-spacing:0.2px;">Software</div>
<div class="t" style="left:305.60px;top:593.84px;font-size:12px;line-height:12px;font-weight:400;color:#111;letter-spacing:0.2px;">Support</div>
<div class="t" style="left:301.00px;top:607.64px;font-size:12px;line-height:12px;font-weight:400;color:#111;letter-spacing:0px;">&bull;</div>
<div class="t" style="left:311.20px;top:607.64px;font-size:12px;line-height:12px;font-weight:400;color:#111;letter-spacing:0.2px;">Microsoft</div>
<div class="t" style="left:311.20px;top:621.44px;font-size:12px;line-height:12px;font-weight:400;color:#111;letter-spacing:0.2px;">Windows</div>
<div class="t" style="left:310.70px;top:635.24px;font-size:12px;line-height:12px;font-weight:400;color:#111;letter-spacing:0px;">&bull;</div>
<div class="t" style="left:321.30px;top:635.24px;font-size:12px;line-height:12px;font-weight:400;color:#111;letter-spacing:0.2px;">Repair</div>
<div class="t" style="left:321.30px;top:649.04px;font-size:12px;line-height:12px;font-weight:400;color:#111;letter-spacing:0.2px;">Request</div>
<div style="position:absolute;left:412px;top:568px;width:272px;height:50px;background:#fff;border:1px solid #cfcfcf;box-sizing:border-box"></div>
<div class="t" style="left:423.30px;top:580.54px;font-size:12px;line-height:12px;font-weight:400;color:#111;letter-spacing:0.22px;"><b>Reimage Computer Lab:</b> Update main</div>
<div class="t" style="left:423.30px;top:594.34px;font-size:12px;line-height:12px;font-weight:400;color:#111;letter-spacing:0.22px;">image on server and run NetInstall.</div>
<div style="position:absolute;left:909px;top:565px;width:91.5px;height:20px;box-sizing:border-box;background:linear-gradient(#5cbf5c,#0f920f);border:1px solid #0b870b;color:#fff;font-weight:700;font-size:13px;line-height:18px;text-align:center;letter-spacing:-0.4px;text-shadow:0 0 1px rgba(0,0,0,0.35)">Assigned</div>
<div style="position:absolute;left:1030px;top:565.5px;width:63px;height:20px;box-sizing:border-box;background:linear-gradient(#ff7a70,#ff3a22 50%,#ff2200);border:1px solid #f02a10;color:#fff;font-weight:700;font-size:13px;line-height:18px;text-align:center;letter-spacing:0px;text-shadow:0 0 1px rgba(0,0,0,0.35)">High</div>
<div style="position:absolute;left:1121.5px;top:565.5px;width:125.5px;height:20px;box-sizing:border-box;background:linear-gradient(#ff7a70,#ff3a22 50%,#ff2200);border:1px solid #f02a10;color:#fff;font-weight:700;font-size:13px;line-height:18px;text-align:center;letter-spacing:0px;text-shadow:0 0 1px rgba(0,0,0,0.35)">Not completed</div>
<div style="position:absolute;left:37px;top:671px;width:14px;height:14px;background:#fff;border:1px solid #b9b9b9;border-radius:3px;box-sizing:border-box"></div>
<div style="position:absolute;left:116.5px;top:674px;width:30px;height:19px;border-radius:4px;background:#467ee0;color:#fff;font-weight:700;font-size:11.5px;line-height:21.4px;text-align:center;letter-spacing:0.3px">11</div>
<svg style="position:absolute;left:166px;top:674px" width="19" height="17" viewBox="0 0 19 17"><rect x="0.6" y="0.6" width="2.5" height="15.8" fill="#b3b3b3"/><rect x="4.2" y="0.6" width="13.8" height="8.2" fill="#b3b3b3"/></svg>
<div class="t" style="right:1003.50px;top:672.64px;font-size:12px;line-height:12px;font-weight:400;color:#111;letter-spacing:0.2px;text-align:right;">10/15/16</div>
<div class="t" style="right:1003.50px;top:686.44px;font-size:12px;line-height:12px;font-weight:400;color:#111;letter-spacing:0.2px;text-align:right;">1:13 pm</div>
<div class="t" style="left:287.00px;top:672.44px;font-size:12px;line-height:12px;font-weight:400;color:#111;letter-spacing:0.2px;">E-Mail Report</div>
<div style="position:absolute;left:412px;top:674px;width:272px;height:50px;background:#fff;border:1px solid #cfcfcf;box-sizing:border-box"></div>
<div class="t" style="left:423.30px;top:686.54px;font-size:12px;line-height:12px;font-weight:400;color:#111;letter-spacing:0.22px;"><b>WHD-Branded iPod!!!:</b> Here is a Web Help</div>
<div class="t" style="left:423.30px;top:700.34px;font-size:12px;line-height:12px;font-weight:400;color:#111;letter-spacing:0.22px;">Desk branded iPod.&nbsp; Pretty cool...huh?! We...</div>
<div style="position:absolute;left:909px;top:671px;width:91.5px;height:20px;box-sizing:border-box;background:linear-gradient(#5cbf5c,#0f920f);border:1px solid #0b870b;color:#fff;font-weight:700;font-size:13px;line-height:18px;text-align:center;letter-spacing:-0.4px;text-shadow:0 0 1px rgba(0,0,0,0.35)">Assigned</div>
<div style="position:absolute;left:1020px;top:672px;width:83px;height:20px;box-sizing:border-box;background:linear-gradient(#b8b8b8,#929292);border:1px solid #959595;color:#fff;font-weight:700;font-size:13px;line-height:18px;text-align:center;letter-spacing:0px;text-shadow:0 0 1px rgba(0,0,0,0.35)">Medium</div>
<div style="position:absolute;left:1121.5px;top:671.5px;width:125.5px;height:20px;box-sizing:border-box;background:linear-gradient(#ffb340,#f59a10);border:1px solid #e8960a;color:#fff;font-weight:700;font-size:13px;line-height:18px;text-align:center;letter-spacing:0px;text-shadow:0 0 1px rgba(0,0,0,0.35)">Not completed</div>
<div style="position:absolute;left:37px;top:740px;width:14px;height:14px;background:#fff;border:1px solid #b9b9b9;border-radius:3px;box-sizing:border-box"></div>
<div style="position:absolute;left:115.5px;top:743px;width:31px;height:19px;border-radius:4px;background:#467ee0;color:#fff;font-weight:700;font-size:11.5px;line-height:21.4px;text-align:center;letter-spacing:0.3px">26</div>
<svg style="position:absolute;left:166px;top:743px" width="19" height="17" viewBox="0 0 19 17"><rect x="0.6" y="0.6" width="2.5" height="15.8" fill="#b3b3b3"/><rect x="4.2" y="0.6" width="13.8" height="8.2" fill="#b3b3b3"/></svg>
<div style="position:absolute;left:75.1px;top:741.4px;width:12.8px;height:12.8px;border-radius:50%;background:#2b90d2"></div>
<div class="t" style="right:1003.50px;top:741.64px;font-size:12px;line-height:12px;font-weight:400;color:#111;letter-spacing:0.2px;text-align:right;">10/30/16</div>
<div class="t" style="right:1003.50px;top:755.44px;font-size:12px;line-height:12px;font-weight:400;color:#111;letter-spacing:0.2px;text-align:right;">4:45 pm</div>
<div class="t" style="left:287.00px;top:741.44px;font-size:12px;line-height:12px;font-weight:400;color:#111;letter-spacing:0.2px;">IT Request</div>
<div class="t" style="left:294.60px;top:755.24px;font-size:12px;line-height:12px;font-weight:400;color:#111;letter-spacing:0px;">&bull;</div>
<div class="t" style="left:305.60px;top:755.24px;font-size:12px;line-height:12px;font-weight:400;color:#111;letter-spacing:0.2px;">Hardware</div>
<div class="t" style="left:305.60px;top:769.04px;font-size:12px;line-height:12px;font-weight:400;color:#111;letter-spacing:0.2px;">Support</div>
<div class="t" style="left:304.60px;top:782.84px;font-size:12px;line-height:12px;font-weight:400;color:#111;letter-spacing:0px;">&bull;</div>
<div class="t" style="left:316.90px;top:782.84px;font-size:12px;line-height:12px;font-weight:400;color:#111;letter-spacing:0.2px;">Laptop</div>
<div class="t" style="left:310.80px;top:796.64px;font-size:12px;line-height:12px;font-weight:400;color:#111;letter-spacing:0px;">&bull;</div>
<div class="t" style="left:320.90px;top:796.64px;font-size:12px;line-height:12px;font-weight:400;color:#111;letter-spacing:0.2px;">Loaner</div>
<div style="position:absolute;left:412px;top:743px;width:272px;height:64px;background:#fff;border:1px solid #cfcfcf;box-sizing:border-box"></div>
<div class="t" style="left:423.30px;top:755.54px;font-size:12px;line-height:12px;font-weight:400;color:#111;letter-spacing:0.22px;"><b>Requesting a travel laptop:</b> I will be</div>
<div class="t" style="left:423.30px;top:769.34px;font-size:12px;line-height:12px;font-weight:400;color:#111;letter-spacing:0.22px;">traveling to the UK next month and would</div>
<div class="t" style="left:423.30px;top:783.14px;font-size:12px;line-height:12px;font-weight:400;color:#111;letter-spacing:0.22px;">like to req...</div>
<div class="t" style="left:754.50px;width:400px;text-align:center;top:741.84px;font-size:12px;line-height:12px;font-weight:400;color:#111;letter-spacing:0.2px;">Approved</div>
<div style="position:absolute;left:1030px;top:740.5px;width:63px;height:20px;box-sizing:border-box;background:linear-gradient(#ff7a70,#ff3a22 50%,#ff2200);border:1px solid #f02a10;color:#fff;font-weight:700;font-size:13px;line-height:18px;text-align:center;letter-spacing:0px;text-shadow:0 0 1px rgba(0,0,0,0.35)">High</div>
<div style="position:absolute;left:1121.5px;top:740.5px;width:125.5px;height:20px;box-sizing:border-box;background:linear-gradient(#ff7a70,#ff3a22 50%,#ff2200);border:1px solid #f02a10;color:#fff;font-weight:700;font-size:13px;line-height:18px;text-align:center;letter-spacing:0px;text-shadow:0 0 1px rgba(0,0,0,0.35)">Not completed</div>
</body></html>
